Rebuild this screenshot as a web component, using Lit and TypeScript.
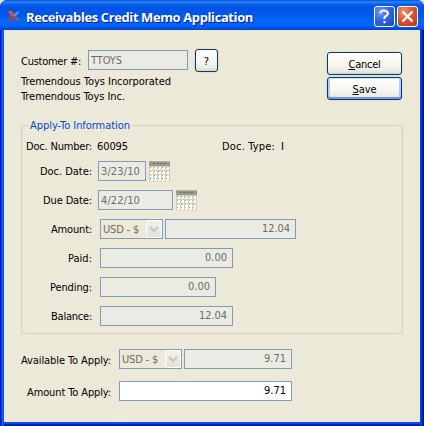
import { LitElement, html, css, svg } from "lit";
import { customElement, property } from "lit/decorators.js";

/** A run of text whose tracking is adjusted to occupy a given width. */
@customElement("fit-text")
class FitText extends LitElement {
  @property({ type: Number }) w = 0;
  @property() text = "";
  @property() key = "";
  static styles = css`
    :host { display: inline-block; white-space: pre; flex: none; }
    .run { display: inline-block; }
    .key { text-decoration: underline; text-underline-offset: 1px; text-decoration-thickness: 1px; }
  `;
  firstUpdated() {
    const run = this.renderRoot.querySelector(".run") as HTMLElement;
    const n = this.text.length + this.key.length;
    const natural = run.getBoundingClientRect().width;
    if (this.w && n) run.style.letterSpacing = (this.w - natural) / n + "px";
  }
  render() {
    return html`<span class="run">${this.key ? html`<span class="key">${this.key}</span>` : ""}${this.text}</span>`;
  }
}

@customElement("text-field")
class TextField extends LitElement {
  @property() text = "";
  @property({ type: Number }) w = 0;
  static styles = css`
    :host {
      box-sizing: border-box; display: flex; align-items: center; flex: none; height: 20px;
      border: 1px solid #7f9db9; background: #ebebe4; color: #6e6d64; padding: 0 5px 2px 3px;
      justify-content: flex-end;
    }
    :host([left]) { justify-content: flex-start; padding: 1px 0 0 2px; }
    :host([active]) { background: #fff; color: #000; }
  `;
  render() {
    return html`<fit-text .w=${this.w} .text=${this.text}></fit-text>`;
  }
}

@customElement("currency-combo")
class CurrencyCombo extends LitElement {
  static styles = css`
    :host {
      box-sizing: border-box; display: flex; align-items: center; justify-content: space-between; flex: none;
      width: 63px; height: 20px; border: 1px solid #7f9db9; color: #6e6d64; padding-left: 2px; background: #ece9d8;
    }
    .drop {
      box-sizing: border-box; width: 16px; height: 18px; border: 1px solid #fff; border-radius: 2px;
      background: linear-gradient(#f2f1ea, #e4e2d6); display: flex; align-items: center; justify-content: center;
    }
    svg { display: block; }
  `;
  render() {
    return html`<fit-text .w=${36} text="USD - $"></fit-text>
      <span class="drop"><svg width="10" height="7"><path d="M1 1 L5 5 L9 1" fill="none" stroke="#c9c7ba" stroke-width="2.4"/></svg></span>`;
  }
}

@customElement("calendar-icon")
class CalendarIcon extends LitElement {
  static styles = css`:host { display: block; flex: none; width: 21px; height: 21px; } svg { display: block; }`;
  render() {
    const cells = [];
    for (let r = 0; r < 4; r++)
      for (let c = 0; c < 5; c++)
        cells.push(svg`<rect x=${1 + c * 4} y=${6 + r * 4 - (r > 2 ? 1 : 0)} width="3" height="3" fill="#fbfaf1"/>
          <rect x=${1 + c * 4} y=${6 + r * 4 - (r > 2 ? 1 : 0)} width="1" height="1" fill=${(r + c) % 3 ? "#b5b4a8" : "#94938a"}/>`);
    return html`<svg width="21" height="21" shape-rendering="crispEdges">
      <rect width="21" height="20" fill="#cfcdbc"/>
      <rect width="21" height="5" fill="#9b998e"/>
      <rect y="0" width="21" height="1" fill="#b3b1a5"/>
      <path d="M4 2.5h2m1 0h3m1 0h2m1 0h3" stroke="#77766d"/>
      ${cells}
      <rect y="20" width="21" height="1" fill="#dfdccb"/>
    </svg>`;
  }
}

@customElement("app-root")
class AppRoot extends LitElement {
  static styles = css`
    :host {
      display: block; width: 424px; height: 426px; background: #e9e4cf; overflow: hidden;
      font: 11px/15px "DejaVu Sans Condensed", "Liberation Sans", sans-serif; color: #000;
    }
    .window {
      box-sizing: border-box; width: 424px; height: 426px; border-radius: 7px 7px 0 0; overflow: hidden;
      background: linear-gradient(90deg, #0016c8 0 1px, #0831d9 1px 2px, #166aee 2px 3px, #0855dd 3px 4px, transparent 4px 420px, #0046e8 420px 421px, #0036e0 421px 422px, #001890 422px),
        linear-gradient(#0050ee 0 424px, #001ea0 424px);
      display: flex; flex-direction: column; padding-bottom: 4px;
    }
    .title {
      box-sizing: border-box; height: 30px; flex: none; display: flex; align-items: center; padding: 4px 6px 0 7px;
      background: linear-gradient(#0a4fd0 0, #2a86fa 2px, #0a62ee 4px, #0054e3 7px, #0056e8 14px, #0065fa 20px, #0066ff 25px, #0054e0 28px, #0042c8 30px);
      color: #fff; font: bold 13px/18px "Open Sans", "Noto Sans", sans-serif; text-shadow: 1px 1px 0 #0a1883;
    }
    .logo { display: block; margin: 0 5px 3px 0; }
    .grow { flex: 1; }
    .cap {
      box-sizing: border-box; width: 21px; height: 21px; border: 1px solid #fff; border-radius: 3px; margin: 0 0 1px 2px;
      background: radial-gradient(circle at 30% 25%, #6f9bf5, #2f62dd 50%, #1d48c0);
    }
    .cap.close { background: radial-gradient(circle at 30% 25%, #ee9070, #dc5030 50%, #b83818); }
    .cap svg { display: block; }
    .body { flex: 1; margin: 0 4px; background: #ece9d8; padding: 19px 17px 0; }
    .top { display: flex; justify-content: space-between; height: 88px; }
    .customer { display: flex; height: 23px; align-items: center; margin-bottom: 2px; }
    .customer fit-text { padding-top: 1px; }
    .customer text-field { width: 100px; margin: 0 7px 1px; }
    .line { height: 15px; }
    .btn {
      box-sizing: border-box; height: 23px; border: 1px solid #003c74; border-radius: 3px;
      background: linear-gradient(#fff, #f6f5f0 60%, #ecebe5 85%, #d9d5ca); display: flex; align-items: center; justify-content: center;
      box-shadow: 0 0 0 1px #e4e0d0; padding-top: 1px;
    }
    .btn.small { width: 23px; }
    .actions { display: flex; flex-direction: column; gap: 2px; width: 75px; padding: 3px 1px 0 0; }
    .btn.default { box-shadow: inset 0 1px #cee7ff, inset 0 -2px #7b94e8, inset 2px 0 #b4c9f5, inset -2px 0 #b4c9f5, 0 0 0 1px #e4e0d0; }
    .group {
      box-sizing: border-box; width: 382px; height: 209px; border: 1px solid #d0d0bf; border-radius: 4px;
      margin: -12px 0 0; padding: 13px 0 0 4px;
    }
    .legend { display: flex; height: 15px; margin: -21px 0 0 2px; }
    .legend fit-text { background: #ece9d8; color: #0046d5; padding: 0 2px; }
    .doc { display: flex; height: 15px; margin-top: 6px; }
    .doc .value { width: 125px; padding-left: 5px; }
    .doc .kind { padding-left: 6px; }
    .rows { display: flex; flex-direction: column; gap: 9px; padding-top: 7px; }
    .row { display: flex; height: 20px; align-items: center; }
    .label { width: 66px; display: flex; justify-content: flex-end; flex: none; }
    .date { margin-left: 6px; margin-right: 3px; }
    .num { margin-left: 8px; }
    .w48 { width: 48px; } .w75 { width: 75px; } .w133 { width: 133px; } .w116 { width: 116px; } .w131 { width: 131px; }
    .w108 { width: 108px; } .w173 { width: 173px; }
    currency-combo + text-field { margin-left: 2px; }
    .foot { padding-top: 15px; display: flex; flex-direction: column; gap: 12px; }
    .foot .label { width: 90px; padding-top: 2px; }
    .foot .num { margin-left: 8px; }
  `;
  render() {
    const t = (text: string, w: number, key = "") => html`<fit-text .w=${w} .text=${text} .key=${key}></fit-text>`;
    const label = (text: string, w: number) => html`<span class="label">${t(text, w)}</span>`;
    return html`<div class="window">
      <div class="title">
        <svg class="logo" width="14" height="10" viewBox="0 0 14 10">
          <path d="M0.500 0H5L8 4.500 5.500 9.500H0L4.500 5.500z" fill="#e0523a"/>
          <path d="M0 9.500L5 5.500 7.500 5 5.500 9.500z" fill="#a03a50"/>
          <path d="M13 0L9.500 1 7 3.500 8.500 5.500z" fill="#4ba0e8"/>
          <path d="M8.500 5L7 6l2.500 3.500H14z" fill="#8a5c78"/>
        </svg>
        ${t("Receivables Credit Memo Application", 227)}
        <span class="grow"></span>
        <span class="cap"><svg width="19" height="19"><path d="M5.500 6.500V5.500Q6 3.500 9 3.500T13 6.200Q13 8 11 9T9.500 12M9.500 14v2.200" fill="none" stroke="#fff" stroke-width="2"/></svg></span>
        <span class="cap close"><svg width="19" height="19"><path d="M4.500 4.500l10 10M14.500 4.500l-10 10" stroke="#fff" stroke-width="2.300"/></svg></span>
      </div>
      <div class="body">
        <div class="top">
          <div>
            <div class="customer">${t("Customer #:", 60)}<text-field left .w=${31} text="TTOYS"></text-field><span class="btn small">?</span></div>
            <div class="line">${t("Tremendous Toys Incorporated", 150)}</div>
            <div class="line">${t("Tremendous Toys Inc.", 104)}</div>
          </div>
          <div class="actions">
            <span class="btn">${t("ancel", 32, "C")}</span>
            <span class="btn default">${t("ave", 24, "S")}</span>
          </div>
        </div>
        <div class="group">
          <div class="legend">${t("Apply-To Information", 100)}</div>
          <div class="doc">${label("Doc. Number:", 66)}<span class="value">${t("60095", 31)}</span>${t("Doc. Type:", 53)}<span class="kind">I</span></div>
          <div class="rows">
            <div class="row">${label("Doc. Date:", 52)}<text-field left class="date w48" .w=${39} text="3/23/10"></text-field><calendar-icon></calendar-icon></div>
            <div class="row">${label("Due Date:", 49)}<text-field left class="date w75" .w=${39} text="4/22/10"></text-field><calendar-icon></calendar-icon></div>
            <div class="row">${label("Amount:", 41)}<currency-combo class="num"></currency-combo><text-field class="w131" .w=${28} text="12.04"></text-field></div>
            <div class="row">${label("Paid:", 24)}<text-field class="num w133" .w=${22} text="0.00"></text-field></div>
            <div class="row">${label("Pending:", 42)}<text-field class="num w116" .w=${22} text="0.00"></text-field></div>
            <div class="row">${label("Balance:", 41)}<text-field class="num w133" .w=${28} text="12.04"></text-field></div>
          </div>
        </div>
        <div class="foot">
          <div class="row">${label("Available To Apply:", 90)}<currency-combo class="num"></currency-combo><text-field class="w108" .w=${22} text="9.71"></text-field></div>
          <div class="row">${label("Amount To Apply:", 84)}<text-field active class="num w173" .w=${22} text="9.71"></text-field></div>
        </div>
      </div>
    </div>`;
  }
}
